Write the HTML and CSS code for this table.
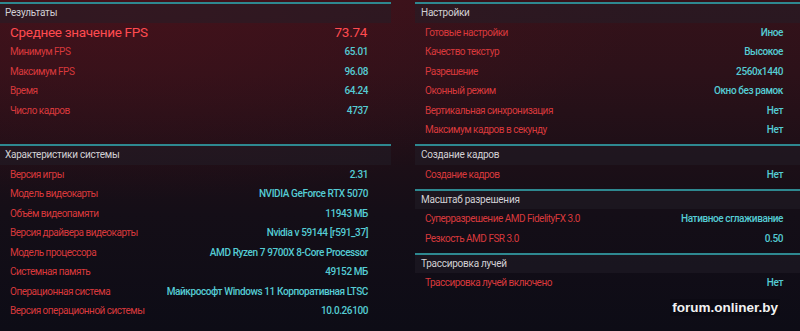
FILE: index.html
```html
<!DOCTYPE html>
<html lang="ru">
<head>
<meta charset="utf-8">
<title>Результаты бенчмарка</title>
<link rel="stylesheet" href="styles.css">
</head>
<body>
<div class="page">
  <div class="col col-left">
    <section class="panel panel-results">
      <div class="hdr">Результаты</div>
      <div class="row row-big"><span class="lbl">Среднее значение FPS</span><span class="val">73.74</span></div>
      <div class="row"><span class="lbl">Минимум FPS</span><span class="val">65.01</span></div>
      <div class="row"><span class="lbl">Максимум FPS</span><span class="val">96.08</span></div>
      <div class="row"><span class="lbl">Время</span><span class="val">64.24</span></div>
      <div class="row"><span class="lbl">Число кадров</span><span class="val">4737</span></div>
    </section>
    <section class="panel">
      <div class="hdr">Характеристики системы</div>
      <div class="row"><span class="lbl">Версия игры</span><span class="val">2.31</span></div>
      <div class="row"><span class="lbl">Модель видеокарты</span><span class="val">NVIDIA GeForce RTX 5070</span></div>
      <div class="row"><span class="lbl">Объём видеопамяти</span><span class="val">11943 МБ</span></div>
      <div class="row"><span class="lbl">Версия драйвера видеокарты</span><span class="val">Nvidia v 59144 [r591_37]</span></div>
      <div class="row"><span class="lbl">Модель процессора</span><span class="val">AMD Ryzen 7 9700X 8-Core Processor</span></div>
      <div class="row"><span class="lbl">Системная память</span><span class="val">49152 МБ</span></div>
      <div class="row"><span class="lbl">Операционная система</span><span class="val">Майкрософт Windows 11 Корпоративная LTSC</span></div>
      <div class="row"><span class="lbl">Версия операционной системы</span><span class="val">10.0.26100</span></div>
    </section>
  </div>
  <div class="col col-right">
    <section class="panel">
      <div class="hdr">Настройки</div>
      <div class="row"><span class="lbl">Готовые настройки</span><span class="val">Иное</span></div>
      <div class="row"><span class="lbl">Качество текстур</span><span class="val">Высокое</span></div>
      <div class="row"><span class="lbl">Разрешение</span><span class="val">2560x1440</span></div>
      <div class="row"><span class="lbl">Оконный режим</span><span class="val">Окно без рамок</span></div>
      <div class="row"><span class="lbl">Вертикальная синхронизация</span><span class="val">Нет</span></div>
      <div class="row"><span class="lbl">Максимум кадров в секунду</span><span class="val">Нет</span></div>
    </section>
    <section class="panel">
      <div class="hdr">Создание кадров</div>
      <div class="row"><span class="lbl">Создание кадров</span><span class="val">Нет</span></div>
    </section>
    <section class="panel">
      <div class="hdr">Масштаб разрешения</div>
      <div class="row"><span class="lbl">Суперразрешение AMD FidelityFX 3.0</span><span class="val">Нативное сглаживание</span></div>
      <div class="row"><span class="lbl">Резкость AMD FSR 3.0</span><span class="val">0.50</span></div>
    </section>
    <section class="panel">
      <div class="hdr">Трассировка лучей</div>
      <div class="row"><span class="lbl">Трассировка лучей включено</span><span class="val">Нет</span></div>
    </section>
    <div class="watermark"><span class="wm-text">forum.onliner.by</span></div>
  </div>
</div>
</body>
</html>
```

FILE: styles.css
```css
html, body {
  margin: 0;
  padding: 0;
}
body {
  width: 800px;
  height: 331px;
  overflow: hidden;
  font-family: Roboto, "DejaVu Sans", sans-serif;
  font-size: 10px;
  background:
    radial-gradient(ellipse 520px 200px at 120px 0px, rgba(80, 18, 28, 0.55), rgba(80, 18, 28, 0) 100%),
    linear-gradient(180deg, #35121a 0%, #2c1119 22%, #1e0f17 45%, #140e17 65%, #0d0c16 100%);
}
.page {
  display: grid;
  grid-template-columns: 391px 385px;
  column-gap: 24px;
  padding-top: 2px;
}
.col {
  display: flex;
  flex-direction: column;
}
.col-left {
  gap: 24px;
}
.col-right {
  gap: 4.5px;
}
.panel {
  border-top: 2px solid #2e8890;
}
.hdr {
  height: 18.5px;
  line-height: 18.5px;
  padding-left: 5px;
  background: rgba(34, 30, 40, 0.5);
  color: #d2d0d4;
  font-size: 10px;
  letter-spacing: -0.25px;
}
.col-right .hdr {
  padding-left: 6px;
}
.row {
  height: 19.5px;
  display: flex;
  align-items: center;
  justify-content: space-between;
  padding: 0 23px 0 10px;
}
.col-right .row {
  padding: 0 17px 0 10px;
}
.lbl {
  color: #d8393c;
  letter-spacing: -0.5px;
}
.val {
  color: #55ccd4;
  font-weight: 500;
  letter-spacing: -0.4px;
}
.row-big .lbl,
.row-big .val {
  color: #ff4b50;
  font-size: 13.5px;
  font-weight: 400;
  letter-spacing: -0.3px;
}
.row-big .val {
  padding-right: 1px;
}
.watermark {
  display: flex;
  justify-content: flex-end;
  padding: 2px 20px 0 0;
}
.wm-text {
  font-family: "Liberation Sans", Arial, sans-serif;
  font-weight: 700;
  font-size: 13.5px;
  color: #f2f2f2;
  background: rgba(5, 5, 10, 0.25);
  padding: 1px 2px;
}
```
